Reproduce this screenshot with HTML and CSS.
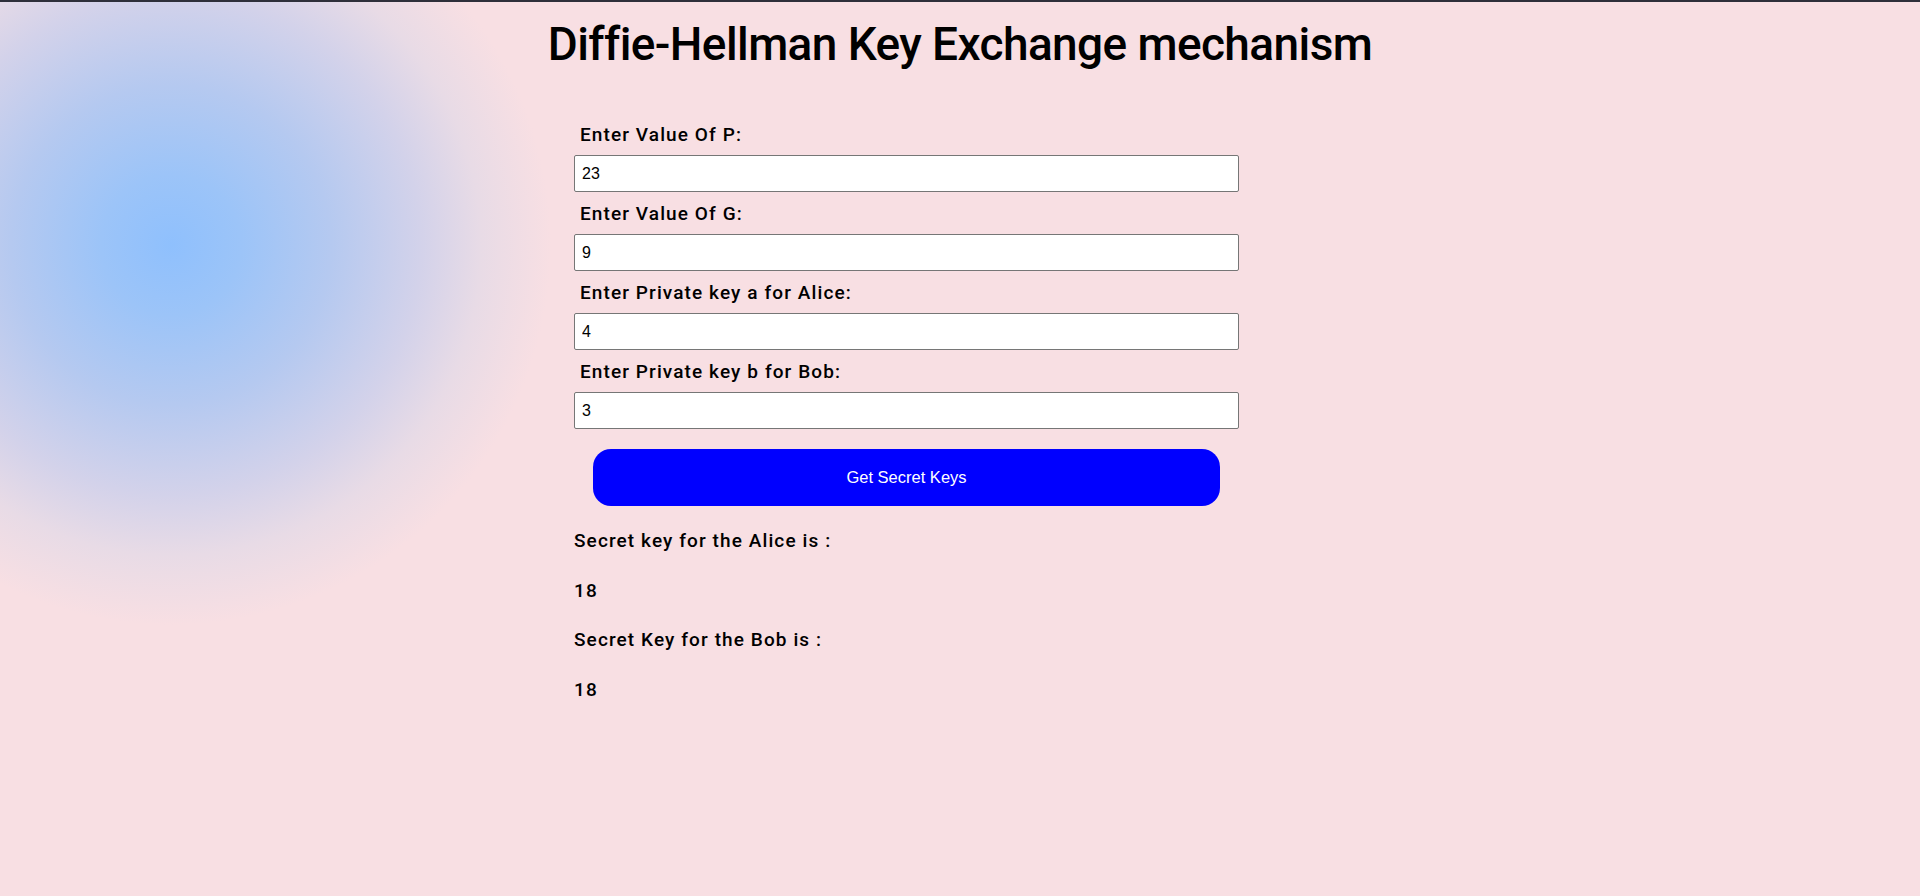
FILE: index.html
```html
<!DOCTYPE html>
<html lang="en">
<head>
<meta charset="utf-8">
<title>Diffie-Hellman Key Exchange mechanism</title>
<link rel="stylesheet" href="styles.css">
</head>
<body>
<div class="topbar"></div>
<h1 class="title">Diffie-Hellman Key Exchange mechanism</h1>
<form class="form">
  <label class="label">Enter Value Of P:</label>
  <input class="field" type="text" value="23">
  <label class="label">Enter Value Of G:</label>
  <input class="field" type="text" value="9">
  <label class="label">Enter Private key a for Alice:</label>
  <input class="field" type="text" value="4">
  <label class="label">Enter Private key b for Bob:</label>
  <input class="field" type="text" value="3">
  <button class="btn" type="button">Get Secret Keys</button>
  <div class="results">
    <p class="res">Secret key for the Alice is :</p>
    <p class="res">18</p>
    <p class="res">Secret Key for the Bob is :</p>
    <p class="res">18</p>
  </div>
</form>
</body>
</html>
```
FILE: styles.css
```css
html, body {
  margin: 0;
  padding: 0;
}
body {
  width: 1920px;
  height: 896px;
  overflow: hidden;
  font-family: Roboto, "Open Sans", "Liberation Sans", sans-serif;
  color: #000;
  background-color: #f8dfe3;
  background-image: radial-gradient(circle at 171px 245px, #8fc0fd 0px, #9cc4f8 70px, #b5c9f0 160px, #d3d2ea 250px, #e8dbe6 310px, rgba(248,223,227,0) 380px);
  background-repeat: no-repeat;
}
.topbar {
  height: 2px;
  background: #2e2f3a;
}
.title {
  margin: 14px 0 0;
  text-align: center;
  font-size: 46px;
  font-weight: 500;
  line-height: 56px;
  letter-spacing: -0.6px;
}
.form {
  width: 665px;
  margin: 41px 0 0 574px;
  display: flex;
  flex-direction: column;
}
.label {
  height: 42px;
  display: flex;
  align-items: center;
  padding-left: 6px;
  font-size: 19px;
  font-weight: 500;
  letter-spacing: 1.1px;
}
.field {
  box-sizing: border-box;
  height: 37px;
  width: 100%;
  margin: 0;
  padding: 0 7px;
  border: 1px solid #767676;
  border-radius: 2px;
  background: #fff;
  font-family: "Liberation Sans", Arial, sans-serif;
  font-size: 16px;
  color: #000;
}
.btn {
  align-self: center;
  width: 627px;
  height: 57px;
  margin-top: 20px;
  border: none;
  border-radius: 18px;
  background: #0000ff;
  color: #fff;
  font-family: "Liberation Sans", Arial, sans-serif;
  font-size: 16.5px;
}
.results {
  margin-top: 20px;
  display: flex;
  flex-direction: column;
  gap: 19.5px;
}
.res {
  margin: 0;
  line-height: 30px;
  font-size: 19px;
  font-weight: 500;
  letter-spacing: 1.1px;
}
```
